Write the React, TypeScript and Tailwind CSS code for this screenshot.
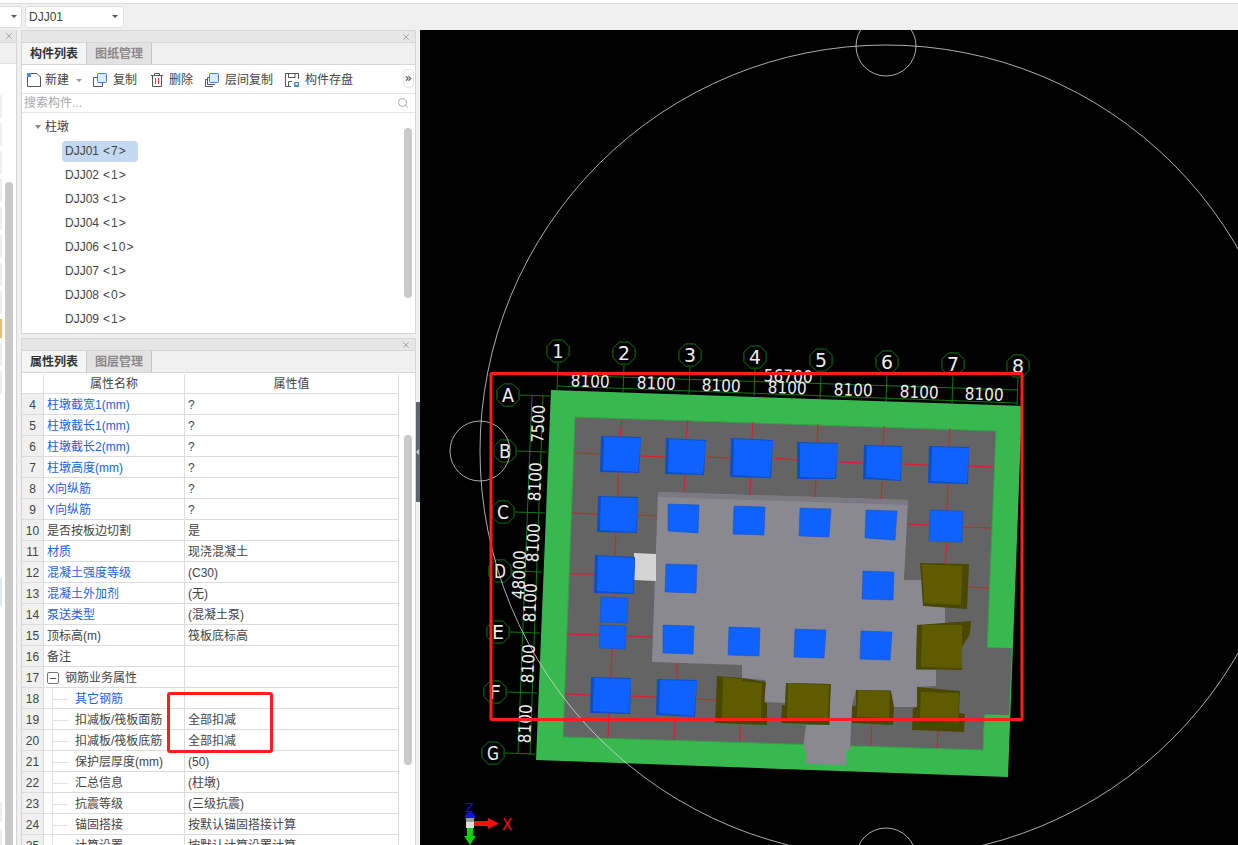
import { ReactNode } from 'react';
import { ChevronsRight, Search, X } from 'lucide-react';

const components = ['DJJ01', 'DJJ02', 'DJJ03', 'DJJ04', 'DJJ06', 'DJJ07', 'DJJ08', 'DJJ09'];
const counts = ['7', '1', '1', '1', '10', '1', '0', '1'];

type Row = { n: number; name: string; value?: string; blue?: boolean; child?: boolean; group?: boolean };

const rows: Row[] = [
  { n: 4, name: '柱墩截宽1(mm)', value: '?', blue: true },
  { n: 5, name: '柱墩截长1(mm)', value: '?', blue: true },
  { n: 6, name: '柱墩截长2(mm)', value: '?', blue: true },
  { n: 7, name: '柱墩高度(mm)', value: '?', blue: true },
  { n: 8, name: 'X向纵筋', value: '?', blue: true },
  { n: 9, name: 'Y向纵筋', value: '?', blue: true },
  { n: 10, name: '是否按板边切割', value: '是' },
  { n: 11, name: '材质', value: '现浇混凝土', blue: true },
  { n: 12, name: '混凝土强度等级', value: '(C30)', blue: true },
  { n: 13, name: '混凝土外加剂', value: '(无)', blue: true },
  { n: 14, name: '泵送类型', value: '(混凝土泵)', blue: true },
  { n: 15, name: '顶标高(m)', value: '筏板底标高' },
  { n: 16, name: '备注' },
  { n: 17, name: '钢筋业务属性', group: true },
  { n: 18, name: '其它钢筋', child: true, blue: true },
  { n: 19, name: '扣减板/筏板面筋', value: '全部扣减', child: true },
  { n: 20, name: '扣减板/筏板底筋', value: '全部扣减', child: true },
  { n: 21, name: '保护层厚度(mm)', value: '(50)', child: true },
  { n: 22, name: '汇总信息', value: '(柱墩)', child: true },
  { n: 23, name: '抗震等级', value: '(三级抗震)', child: true },
  { n: 24, name: '锚固搭接', value: '按默认锚固搭接计算', child: true },
  { n: 25, name: '计算设置', value: '按默认计算设置计算', child: true },
];

const F = "font-['Liberation_Sans','Noto_Sans_CJK_SC',sans-serif]";

type Pt = number[];
const pts = (p: Pt) => p.join(' ');

// 蓝色柱子 (x1,y1,x2,y2,x3,y3,x4,y4)
const blueLarge: Pt[] = [
  [601, 436, 641, 437, 639, 473, 600, 472],
  [666, 438, 706, 440, 704, 475, 665, 474],
  [731, 438, 773, 440, 771, 478, 730, 477],
  [797, 442, 838, 443, 836, 479, 797, 479],
  [864, 445, 902, 446, 901, 481, 863, 479],
  [929, 446, 969, 447, 968, 484, 928, 483],
  [598, 496, 638, 497, 637, 533, 597, 532],
  [595, 555, 635, 557, 634, 594, 594, 593],
  [591, 677, 631, 678, 630, 714, 590, 713],
  [657, 679, 697, 680, 695, 717, 656, 715],
];
const blueSmall: Pt[] = [
  [668, 504, 699, 505, 698, 533, 668, 531],
  [734, 506, 765, 507, 764, 535, 733, 534],
  [800, 508, 831, 509, 829, 537, 799, 536],
  [866, 510, 897, 511, 895, 540, 865, 538],
  [930, 510, 963, 511, 962, 542, 929, 541],
  [666, 564, 697, 565, 696, 593, 665, 592],
  [863, 571, 894, 572, 893, 600, 862, 599],
  [601, 597, 628, 598, 627, 623, 600, 622],
  [600, 625, 626, 626, 625, 649, 599, 648],
  [663, 625, 694, 626, 693, 654, 663, 653],
  [729, 627, 760, 628, 759, 656, 728, 655],
  [795, 629, 826, 630, 824, 658, 794, 657],
  [861, 631, 892, 632, 890, 660, 860, 659],
];
// 土黄色柱子: 外轮廓 + 正面
const olive: [Pt, Pt][] = [
  [[920, 563, 969, 564, 967, 609, 923, 606], [922, 564, 962, 566, 961, 605, 924, 603]],
  [[917, 625, 971, 621, 970, 634, 962, 647, 962, 670, 916, 669], [922, 625, 962, 625, 962, 668, 921, 667]],
  [[717, 676, 742, 678, 766, 682, 764, 702, 767, 703, 767, 725, 715, 723], [723, 677, 742, 679, 742, 681, 762, 683, 761, 721, 722, 720]],
  [[786, 683, 831, 684, 829, 725, 781, 723, 782, 705, 785, 705], [788, 683, 829, 685, 828, 720, 787, 718]],
  [[856, 690, 891, 691, 894, 707, 893, 725, 852, 723, 852, 707, 856, 705], [858, 690, 890, 691, 889, 718, 857, 717]],
  [[917, 687, 960, 691, 959, 713, 965, 714, 964, 732, 912, 730, 913, 708, 917, 707], [921, 692, 959, 693, 958, 722, 920, 720]],
];
const redLines: Pt[] = [
  [622, 419, 620, 437], [575, 453, 601, 454], [640, 456, 666, 457], [688, 420, 686, 438], [706, 457, 731, 458],
  [753, 422, 752, 438], [773, 458, 797, 460], [818, 424, 817, 442], [838, 462, 864, 463], [884, 426, 883, 445],
  [902, 464, 929, 465], [950, 428, 949, 446], [968, 466, 994, 467], [618, 473, 618, 496], [685, 475, 684, 493],
  [751, 478, 750, 495], [816, 479, 815, 497], [882, 481, 881, 499], [948, 484, 947, 510], [572, 513, 598, 514],
  [637, 515, 658, 516], [907, 524, 930, 525], [962, 527, 991, 528], [947, 542, 945, 563], [616, 533, 615, 555],
  [570, 574, 595, 574], [968, 587, 989, 588], [614, 594, 614, 597], [567, 634, 600, 635], [626, 636, 652, 637],
  [612, 649, 611, 677], [565, 694, 591, 695], [630, 696, 656, 697], [677, 662, 677, 679], [697, 699, 716, 700],
  [609, 714, 608, 738], [675, 717, 674, 740], [740, 725, 740, 742], [872, 723, 871, 746], [938, 731, 937, 748],
];

const cols = [
  [558, 351, '1'], [624, 353, '2'], [690, 355, '3'], [755, 357, '4'],
  [821, 360, '5'], [887, 362, '6'], [953, 364, '7'], [1018, 366, '8'],
] as const;
const gridRows = [
  [508, 395, 'A'], [505, 451, 'B'], [503, 512, 'C'], [500, 571, 'D'],
  [498, 632, 'E'], [495, 692, 'F'], [493, 753, 'G'],
] as const;

function octagon(cx: number, cy: number, r = 12) {
  const out: number[] = [];
  for (let i = 0; i < 8; i++) {
    const a = Math.PI / 8 + (i * Math.PI) / 4;
    out.push(cx + r * Math.cos(a), cy + r * Math.sin(a));
  }
  return out.join(' ');
}

function Block({ p, base, face }: { p: Pt; base: string; face: string }) {
  const inset = [p[0] + 3, p[1] + 1, p[2], p[3] + 1, p[4] - 1, p[5] - 1, p[6] + 3, p[7] - 2];
  return (
    <g>
      <polygon points={pts(p)} fill={base} />
      <polygon points={pts(inset)} fill={face} />
    </g>
  );
}

function ModelView() {
  return (
    <svg viewBox="420 30 818 815" className="w-full h-full block bg-black">
      {/* 基础底板 */}
      <polygon points="551,390 1022,406 1008,777 536,760" fill="#38b94f" />
      <polygon points="575,417 996,431 983,750 563,737" fill="#646464" />
      <polygon points="575,417 996,431 983,750 563,737" fill="none" stroke="#33a346" strokeWidth="1" />
      <polygon points="964,647 1012,648 1009,715 960,714" fill="#646464" />

      {redLines.map((l, i) => (
        <line key={i} x1={l[0]} y1={l[1]} x2={l[2]} y2={l[3]} stroke="#e01b24" strokeWidth="1" />
      ))}

      {/* 垫层平台 */}
      <polygon
        points="658,492 908,500 904,580 923,580 923,606 945,606 945,625 917,625 916,670 936,670 936,686 917,687 917,707 891,707 891,690 856,690 852,705 850,750 846,750 846,765 806,764 806,750 803,749 806,725 830,725 830,684 786,683 785,703 765,702 765,680 742,678 742,665 652,662"
        fill="#8a8992"
      />
      <polygon points="658,492 908,500 907,505 658,497" fill="#7b7a83" />
      <polygon points="634,553 656,554 656,581 634,580" fill="#d4d4d4" />

      {blueLarge.map((p, i) => (
        <Block key={i} p={p} base="#0c4fc4" face="#0f62fe" />
      ))}
      {blueSmall.map((p, i) => (
        <polygon key={i} points={pts(p)} fill="#0f62fe" stroke="#0d50c8" strokeWidth="0.5" />
      ))}
      {olive.map(([outer, face], i) => (
        <g key={i}>
          <polygon points={pts(outer)} fill="#4a4700" />
          <polygon points={pts(face)} fill="#5f5c00" />
        </g>
      ))}

      {/* 轴网 */}
      <g stroke="#0f7a0f" strokeWidth="1" fill="none">
        <polyline points="557,375 1018,390" />
        <polyline points="557,386 1017,403" />
        <polyline points="532,395 518,753" />
        <polyline points="543,395 530,755" />
        {cols.map(([x, y]) => (
          <line key={x} x1={x} y1={y + 12} x2={x - 1} y2={y + 39} />
        ))}
        {gridRows.map(([x, y]) => (
          <line key={y} x1={x + 12} y1={y} x2={x + 42} y2={y + 1} />
        ))}
        {cols.map(([x, y]) => (
          <polygon key={x} points={octagon(x, y)} />
        ))}
        {gridRows.map(([x, y]) => (
          <polygon key={y} points={octagon(x, y)} />
        ))}
      </g>
      <g fill="#eeeeee" fontFamily="'DejaVu Sans', sans-serif" textAnchor="middle">
        {cols.map(([x, y, t]) => (
          <text key={x} x={x} y={y + 7} fontSize="19" textLength={t === '1' ? 11 : 12} lengthAdjust="spacingAndGlyphs">{t}</text>
        ))}
        {gridRows.map(([x, y, t]) => (
          <text key={y} x={x} y={y + 7} fontSize="19" textLength={12} lengthAdjust="spacingAndGlyphs">{t}</text>
        ))}
        {[590, 656, 721, 787, 853, 919, 984].map((x, i) => (
          <text key={x} x={x} y={387 + i * 2.2} fontSize="17" textLength={39} lengthAdjust="spacingAndGlyphs" transform={`rotate(1.9 ${x} ${387 + i * 2.2})`}>8100</text>
        ))}
        <text x={788} y={382} fontSize="17" textLength={49} lengthAdjust="spacingAndGlyphs" transform="rotate(1.9 788 382)">56700</text>
        <text x={0} y={0} fontSize="17" textLength={38} lengthAdjust="spacingAndGlyphs" transform="translate(544 424) rotate(-87.7)">7500</text>
        {[[541, 482], [539, 543], [536, 603], [534, 664], [531, 724]].map(([x, y]) => (
          <text key={y} x={0} y={0} fontSize="17" textLength={39} lengthAdjust="spacingAndGlyphs" transform={`translate(${x} ${y}) rotate(-87.7)`}>8100</text>
        ))}
        <text x={0} y={0} fontSize="17" textLength={49} lengthAdjust="spacingAndGlyphs" transform="translate(525 575) rotate(-87.7)">48000</text>
      </g>

      {/* CAD 圆 */}
      <g stroke="#d8d8d8" strokeWidth="0.8" fill="none">
        <circle cx="886" cy="451" r="406" />
        <circle cx="886" cy="46" r="30" />
        <circle cx="480" cy="451" r="30" />
        <circle cx="886" cy="858" r="30" />
      </g>

      {/* 选择框 */}
      <rect x="491" y="373.5" width="531" height="346" rx="1" fill="none" stroke="#ff1f1a" strokeWidth="3" />

      {/* 坐标轴 */}
      <polygon points="474,821 488,821 488,818 499,823.5 488,829 488,826 474,826" fill="#f01010" />
      <text x="502" y="830" fontSize="15" fill="#f01010" fontFamily="'DejaVu Sans', sans-serif">X</text>
      <text x="465.5" y="812" fontSize="12" fill="#1212e0" fontFamily="'DejaVu Sans', sans-serif">Z</text>
      <circle cx="470" cy="817" r="5" fill="#1212e0" />
      <rect x="466" y="818" width="8" height="4" fill="#999999" />
      <rect x="466" y="822" width="8" height="6" fill="#dddddd" />
      <rect x="467" y="828" width="6" height="10" fill="#10d010" />
      <polygon points="464,836 476,836 470,845" fill="#10d010" />
    </svg>
  );
}

function PanelBar() {
  return (
    <div className="h-[11px] bg-[#e6e6e6] flex items-center justify-end pr-1 shrink-0">
      <X size={10} className="text-[#9a9a9a]" />
    </div>
  );
}

function Tabs({ a, b }: { a: string; b: string }) {
  return (
    <div className="h-[23px] bg-[#f0f0f0] flex shrink-0 border-y border-[#d6d6d6]">
      <div className="w-[65px] border-r border-[#cfcfcf] bg-[#f5f5f5] flex items-center justify-center text-[12px] font-bold text-[#333]">{a}</div>
      <div className="w-[65px] border-r border-[#c4c4c4] bg-[#e2e2e2] flex items-center justify-center text-[12px] font-bold text-[#8a8a8a]">{b}</div>
    </div>
  );
}

function ToolButton({ icon, label, className }: { icon: ReactNode; label: string; className?: string }) {
  return (
    <div className={`flex items-center gap-[5px] ${className ?? ''}`}>
      {icon}
      <span className="text-[12px] text-[#444] leading-none">{label}</span>
    </div>
  );
}

const s = { fill: 'none', stroke: '#555', strokeWidth: 1 };
const IconNew = (
  <svg width="16" height="16" viewBox="0 0 16 16">
    <path d="M4.5 1.5H11L14.5 5V14.5H1.5V5" {...s} />
    <rect x="1" y="1" width="4" height="4" fill="#4a90e2" />
  </svg>
);
const IconCopy = (
  <svg width="16" height="16" viewBox="0 0 16 16">
    <path d="M5.5 5.5H1.5V14.5H10.5V11" {...s} />
    <rect x="5.5" y="1.5" width="9" height="9" rx="1" fill="#dcebfb" stroke="#3d7fd6" />
  </svg>
);
const IconDelete = (
  <svg width="14" height="16" viewBox="0 0 14 16">
    <path d="M1 3.5H13M4.5 3.5V1.5H9.5V3.5M2.5 3.5V14.5H11.5V3.5" {...s} />
    <path d="M5.5 6V12M8.5 6V12" stroke="#d33" fill="none" />
  </svg>
);
const IconFloorCopy = (
  <svg width="16" height="16" viewBox="0 0 16 16">
    <path d="M5 5.5H3.5V12.5H11M3.5 7.5H1.5V14.5H9" {...s} />
    <rect x="5.5" y="1.5" width="9" height="9" rx="1" fill="#dcebfb" stroke="#3d7fd6" />
  </svg>
);
const IconSave = (
  <svg width="16" height="16" viewBox="0 0 16 16">
    <path d="M14.5 7V1.5H1.5V14.5H7M4.5 1.5V5.5H11V1.5M4.5 14.5V9.5H8" {...s} />
    <rect x="10" y="10" width="5" height="5" fill="#4a90e2" />
    <rect x="11.5" y="11" width="2" height="2" fill="#fff" />
  </svg>
);

function ComponentPanel() {
  return (
    <div className="h-[304px] shrink-0 border border-[#d6d6d6] flex flex-col bg-white">
      <PanelBar />
      <Tabs a="构件列表" b="图纸管理" />
      <div className="h-[29px] flex items-center pl-[4px] pt-[2px] border-b border-[#e6e6e6] relative shrink-0">
        <ToolButton icon={IconNew} label="新建" className="!gap-[3px]" />
        <span className="ml-[7px] w-0 h-0 border-x-[3px] border-x-transparent border-t-[3px] border-t-[#999]" />
        <ToolButton icon={IconCopy} label="复制" className="ml-[10px]" />
        <ToolButton icon={IconDelete} label="删除" className="ml-[13px]" />
        <ToolButton icon={IconFloorCopy} label="层间复制" className="ml-[11px]" />
        <ToolButton icon={IconSave} label="构件存盘" className="ml-[11px]" />
        <div className="absolute right-[1px] top-[4px] w-[11px] h-[19px] border border-[#e6e6e6] rounded-sm flex items-center justify-center">
          <ChevronsRight size={9} className="text-[#555]" strokeWidth={3} />
        </div>
      </div>
      <div className="h-[19px] flex items-center justify-between px-[2px] pr-[6px] border-b border-[#e6e6e6] shrink-0">
        <span className="text-[12px] text-[#a8a8a8]">搜索构件...</span>
        <Search size={12} className="text-[#aaa]" />
      </div>
      <div className="flex-1 relative overflow-hidden">
        <div className="flex items-center h-[24px] pl-[13px] mt-[2px]">
          <span className="w-0 h-0 border-x-[3.5px] border-x-transparent border-t-[4px] border-t-[#888] mr-[4px]" />
          <span className="text-[12px] text-[#444]">柱墩</span>
        </div>
        <div className="pl-[40px]">
          {components.map((c, i) => (
            <div key={c} className="h-[24px] flex items-center">
              <div className={`h-[21px] w-[76px] rounded-sm pl-[3px] flex items-center text-[12px] text-[#444] whitespace-nowrap ${i === 0 ? 'bg-[#c2d9f1]' : ''}`}>
                {c}<span className="ml-[4px] tracking-[1px] font-light">&lt;{counts[i]}&gt;</span>
              </div>
            </div>
          ))}
        </div>
        <div className="absolute right-[3px] top-[15px] bottom-[35px] w-[8px] rounded-full bg-[#c9c9c9]" />
      </div>
    </div>
  );
}

function PropertyPanel() {
  return (
    <div className="flex-1 mt-[4px] border border-[#d6d6d6] border-b-0 flex flex-col bg-white overflow-hidden">
      <PanelBar />
      <Tabs a="属性列表" b="图层管理" />
      <div className="relative flex-1 overflow-hidden">
        <div className="w-[377px] text-[12px] text-[#444]">
          <div className="flex h-[21px] border-b border-[#dcdcdc] pt-[2px]">
            <div className="w-[22px] border-r border-[#dcdcdc]" />
            <div className="w-[141px] border-r border-[#dcdcdc] flex items-center justify-center">属性名称</div>
            <div className="w-[214px] border-r border-[#dcdcdc] flex items-center justify-center">属性值</div>
          </div>
          {rows.map((r) => (
            <div key={r.n} className="flex h-[21px] border-b border-[#dcdcdc]">
              <div className="w-[22px] bg-[#f0f0f0] border-r border-[#dcdcdc] flex items-center justify-center text-[#444] shrink-0 pt-[2px]">{r.n}</div>
              <div className="w-[141px] border-r border-[#dcdcdc] flex items-center shrink-0 whitespace-nowrap relative pt-[2px]">
                {r.group && (
                  <>
                    <span className="ml-[3px] w-[12px] h-[12px] border border-[#777] rounded-[2px] flex items-center justify-center">
                      <span className="w-[6px] h-px bg-[#555]" />
                    </span>
                    <span className="ml-[6px]">{r.name}</span>
                  </>
                )}
                {r.child && (
                  <>
                    <span className="absolute left-[8px] top-0 bottom-0 w-px bg-[#e2e2e2]" />
                    <span className="ml-[9px] w-[15px] h-px bg-[#e2e2e2]" />
                    <span className={`ml-[7px] ${r.blue ? 'text-[#1a62e8]' : ''}`}>{r.name}</span>
                  </>
                )}
                {!r.group && !r.child && <span className={`ml-[3px] ${r.blue ? 'text-[#1a62e8]' : ''}`}>{r.name}</span>}
              </div>
              <div className="w-[214px] border-r border-[#dcdcdc] flex items-center pl-[3px] shrink-0 pt-[2px]">{r.value}</div>
            </div>
          ))}
        </div>
        <div className="absolute right-[3px] top-[62px] h-[330px] w-[8px] rounded-full bg-[#c9c9c9]" />
      </div>
    </div>
  );
}

// 左侧窄栏里露出的单元格 (上边距, 高, 颜色)
const railCells = [
  ...Array.from({ length: 8 }, () => ['mt-[5px]', 'h-[23px]', 'bg-[#efefef]']),
  ['mt-[5px]', 'h-[19px]', 'bg-[#e8c06a]'],
  ['mt-[5px]', 'h-[23px]', 'bg-[#efefef]'],
  ['mt-[5px]', 'h-[23px]', 'bg-[#efefef]'],
  ['mt-[184px]', 'h-[28px]', 'bg-[#dbe9fb]'],
  ['mt-[196px]', 'h-[20px]', 'bg-[#efefef]'],
  ['mt-[7px]', 'h-[22px]', 'bg-[#efefef]'],
];

export default function App() {
  return (
    <div className={`relative w-[1238px] h-[845px] overflow-hidden flex flex-col bg-[#f0f0f0] ${F}`}>
      {/* 顶部工具条 */}
      <div className="h-[30px] shrink-0 border-t-[3px] border-white flex items-center bg-[#f0f0f0]">
        <div className="w-full h-full border-t border-[#dcdcdc] flex items-center pb-[1px]">
          <div className="w-[22px] h-[22px] bg-white border border-[#dfdfdf] rounded-r-[3px] border-l-0 flex items-center justify-end pr-[4px]">
            <span className="w-0 h-0 border-x-[3px] border-x-transparent border-t-[3px] border-t-[#555]" />
          </div>
          <div className="ml-[3px] w-[99px] h-[22px] bg-white border border-[#dfdfdf] rounded-[3px] flex items-center justify-between pl-[3px] pr-[5px]">
            <span className="text-[12px] text-[#444]">DJJ01</span>
            <span className="w-0 h-0 border-x-[3px] border-x-transparent border-t-[3px] border-t-[#555]" />
          </div>
        </div>
      </div>

      <div className="flex-1 flex min-h-0">
        {/* 左侧窄栏 */}
        <div className="w-[17px] shrink-0 flex flex-col border-r border-[#d6d6d6] bg-white">
          <div className="h-[12px] bg-[#e6e6e6] flex items-center justify-end pr-[2px] shrink-0">
            <X size={10} className="text-[#9a9a9a]" />
          </div>
          <div className="h-[22px] bg-[#f0f0f0] border-y border-[#dcdcdc] shrink-0" />
          <div className="flex-1 flex min-h-0">
            <div className="w-[2px] flex flex-col shrink-0">
              <div className="h-[26px] shrink-0" />
              {railCells.map((c, i) => (
                <div key={i} className={`shrink-0 ${c[0]} ${c[1]} ${c[2]}`} />
              ))}
            </div>
            <div className="w-[8px] ml-[3px] mt-[118px] bg-[#c9c9c9] rounded-t-full" />
          </div>
        </div>
        <div className="w-[4px] shrink-0 bg-[#f0f0f0]" />

        {/* 中间面板 */}
        <div className="w-[395px] shrink-0 flex flex-col">
          <ComponentPanel />
          <PropertyPanel />
        </div>

        {/* 分隔条 */}
        <div className="w-[4px] shrink-0 bg-[#f0f0f0] relative">
          <div className="absolute left-0 top-[372px] w-[4px] h-[100px] bg-[#5b6670] flex items-center">
            <span className="w-0 h-0 border-y-[3px] border-y-transparent border-r-[3px] border-r-[#c9c9c9]" />
          </div>
        </div>

        <div className="flex-1 min-w-0">
          <ModelView />
        </div>
      </div>

      {/* 标注红框 */}
      <div className="absolute left-[167px] top-[692px] w-[106px] h-[61px] border-[3px] border-[#ff1f1a] rounded-[3px]" />
    </div>
  );
}
